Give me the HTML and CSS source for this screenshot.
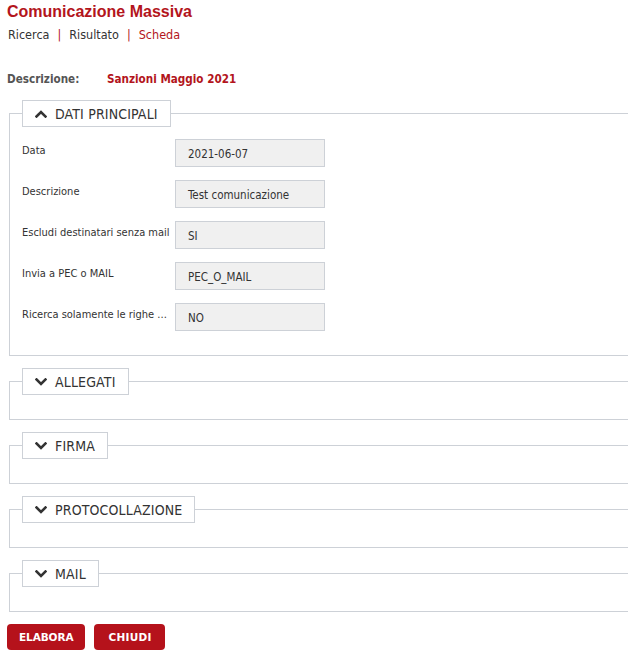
FILE: index.html
```html
<!DOCTYPE html>
<html lang="it">
<head>
<meta charset="utf-8">
<title>Comunicazione Massiva</title>
<link rel="stylesheet" href="styles.css">
</head>
<body>
<div class="page">
  <h1 class="title">Comunicazione Massiva</h1>
  <nav class="crumbs">
    <span class="crumb">Ricerca</span><span class="sep">|</span><span class="crumb">Risultato</span><span class="sep">|</span><span class="crumb active">Scheda</span>
  </nav>
  <div class="summary">
    <span class="summary-label">Descrizione:</span>
    <span class="summary-value">Sanzioni Maggio 2021</span>
  </div>

  <fieldset class="panel">
    <legend class="panel-head">
      <svg class="chev" viewBox="0 0 12 8" width="12" height="8"><polyline points="1.5,6.5 6,2 10.5,6.5" fill="none" stroke="#333" stroke-width="2.6" stroke-linecap="square"/></svg>
      <span>DATI PRINCIPALI</span>
    </legend>
    <div class="form">
      <div class="label">Data</div><div class="field">2021-06-07</div>
      <div class="label">Descrizione</div><div class="field">Test comunicazione</div>
      <div class="label">Escludi destinatari senza mail</div><div class="field">SI</div>
      <div class="label">Invia a PEC o MAIL</div><div class="field">PEC_O_MAIL</div>
      <div class="label">Ricerca solamente le righe ...</div><div class="field">NO</div>
    </div>
  </fieldset>

  <fieldset class="panel collapsed">
    <legend class="panel-head">
      <svg class="chev" viewBox="0 0 12 8" width="12" height="8"><polyline points="1.5,1.5 6,6 10.5,1.5" fill="none" stroke="#333" stroke-width="2.6" stroke-linecap="square"/></svg>
      <span>ALLEGATI</span>
    </legend>
  </fieldset>

  <fieldset class="panel collapsed">
    <legend class="panel-head">
      <svg class="chev" viewBox="0 0 12 8" width="12" height="8"><polyline points="1.5,1.5 6,6 10.5,1.5" fill="none" stroke="#333" stroke-width="2.6" stroke-linecap="square"/></svg>
      <span>FIRMA</span>
    </legend>
  </fieldset>

  <fieldset class="panel collapsed">
    <legend class="panel-head">
      <svg class="chev" viewBox="0 0 12 8" width="12" height="8"><polyline points="1.5,1.5 6,6 10.5,1.5" fill="none" stroke="#333" stroke-width="2.6" stroke-linecap="square"/></svg>
      <span>PROTOCOLLAZIONE</span>
    </legend>
  </fieldset>

  <fieldset class="panel collapsed">
    <legend class="panel-head">
      <svg class="chev" viewBox="0 0 12 8" width="12" height="8"><polyline points="1.5,1.5 6,6 10.5,1.5" fill="none" stroke="#333" stroke-width="2.6" stroke-linecap="square"/></svg>
      <span>MAIL</span>
    </legend>
  </fieldset>

  <div class="actions">
    <button class="btn">ELABORA</button>
    <button class="btn btn-wide">CHIUDI</button>
  </div>
</div>
</body>
</html>
```

FILE: styles.css
```css
html, body {
  margin: 0;
  padding: 0;
  overflow: hidden;
  background: #fff;
}
body {
  font-family: "DejaVu Sans Condensed", "DejaVu Sans", sans-serif;
  color: #333;
}
.page {
  padding: 0 0 0 7px;
  width: 660px;
}
.title {
  margin: 0;
  padding-top: 2px;
  font-family: "Liberation Sans", Arial, sans-serif;
  font-size: 16px;
  font-weight: bold;
  line-height: 19px;
  color: #b3151c;
}
.crumbs {
  margin-top: 6px;
  padding-left: 1px;
  font-size: 12.5px;
  line-height: 16px;
  color: #333;
}
.sep {
  color: #b3151c;
  margin: 0 8px;
}
.crumb.active {
  color: #b3151c;
}
.summary {
  margin-top: 29px;
  display: flex;
  font-weight: bold;
  font-size: 11.6px;
  line-height: 14px;
}
.summary-label {
  width: 100px;
  color: #555;
}
.summary-value {
  color: #b3151c;
}
.panel {
  margin: 14px 0 0 2px;
  padding: 0 0 24px 12px;
  border: 1px solid #cdd1d7;
  min-width: 0;
}
.panel + .panel {
  margin-top: 12px;
}
.panel-head {
  display: flex;
  align-items: center;
  gap: 8px;
  height: 25px;
  padding: 0 12px 0 12px;
  border: 1px solid #cdd1d7;
  background: #fff;
  font-size: 14px;
  letter-spacing: 0.15px;
  color: #333;
}
.chev {
  display: block;
  flex: none;
}
.form {
  display: grid;
  grid-template-columns: 153px 150px;
  grid-auto-rows: 28px;
  row-gap: 13px;
  margin-top: 12px;
}
.label {
  font-size: 11px;
  line-height: 14px;
  padding-top: 5px;
  white-space: nowrap;
  color: #333;
}
.field {
  box-sizing: border-box;
  height: 28px;
  border: 1px solid #cdd1d7;
  background: #f0f0f0;
  padding: 2px 12px 0;
  font-size: 11.5px;
  line-height: 24px;
  color: #333;
}
.actions {
  display: flex;
  gap: 9px;
  margin-top: 12px;
}
.btn {
  height: 26px;
  padding: 0 12px;
  border: none;
  border-radius: 4px;
  background: #b5121b;
  color: #fff;
  font-family: "DejaVu Sans", Verdana, sans-serif;
  font-weight: bold;
  font-size: 10.5px;
  letter-spacing: -0.1px;
  cursor: pointer;
}
.btn-wide {
  padding: 0 13px 0 14px;
  letter-spacing: 0.3px;
}
```
